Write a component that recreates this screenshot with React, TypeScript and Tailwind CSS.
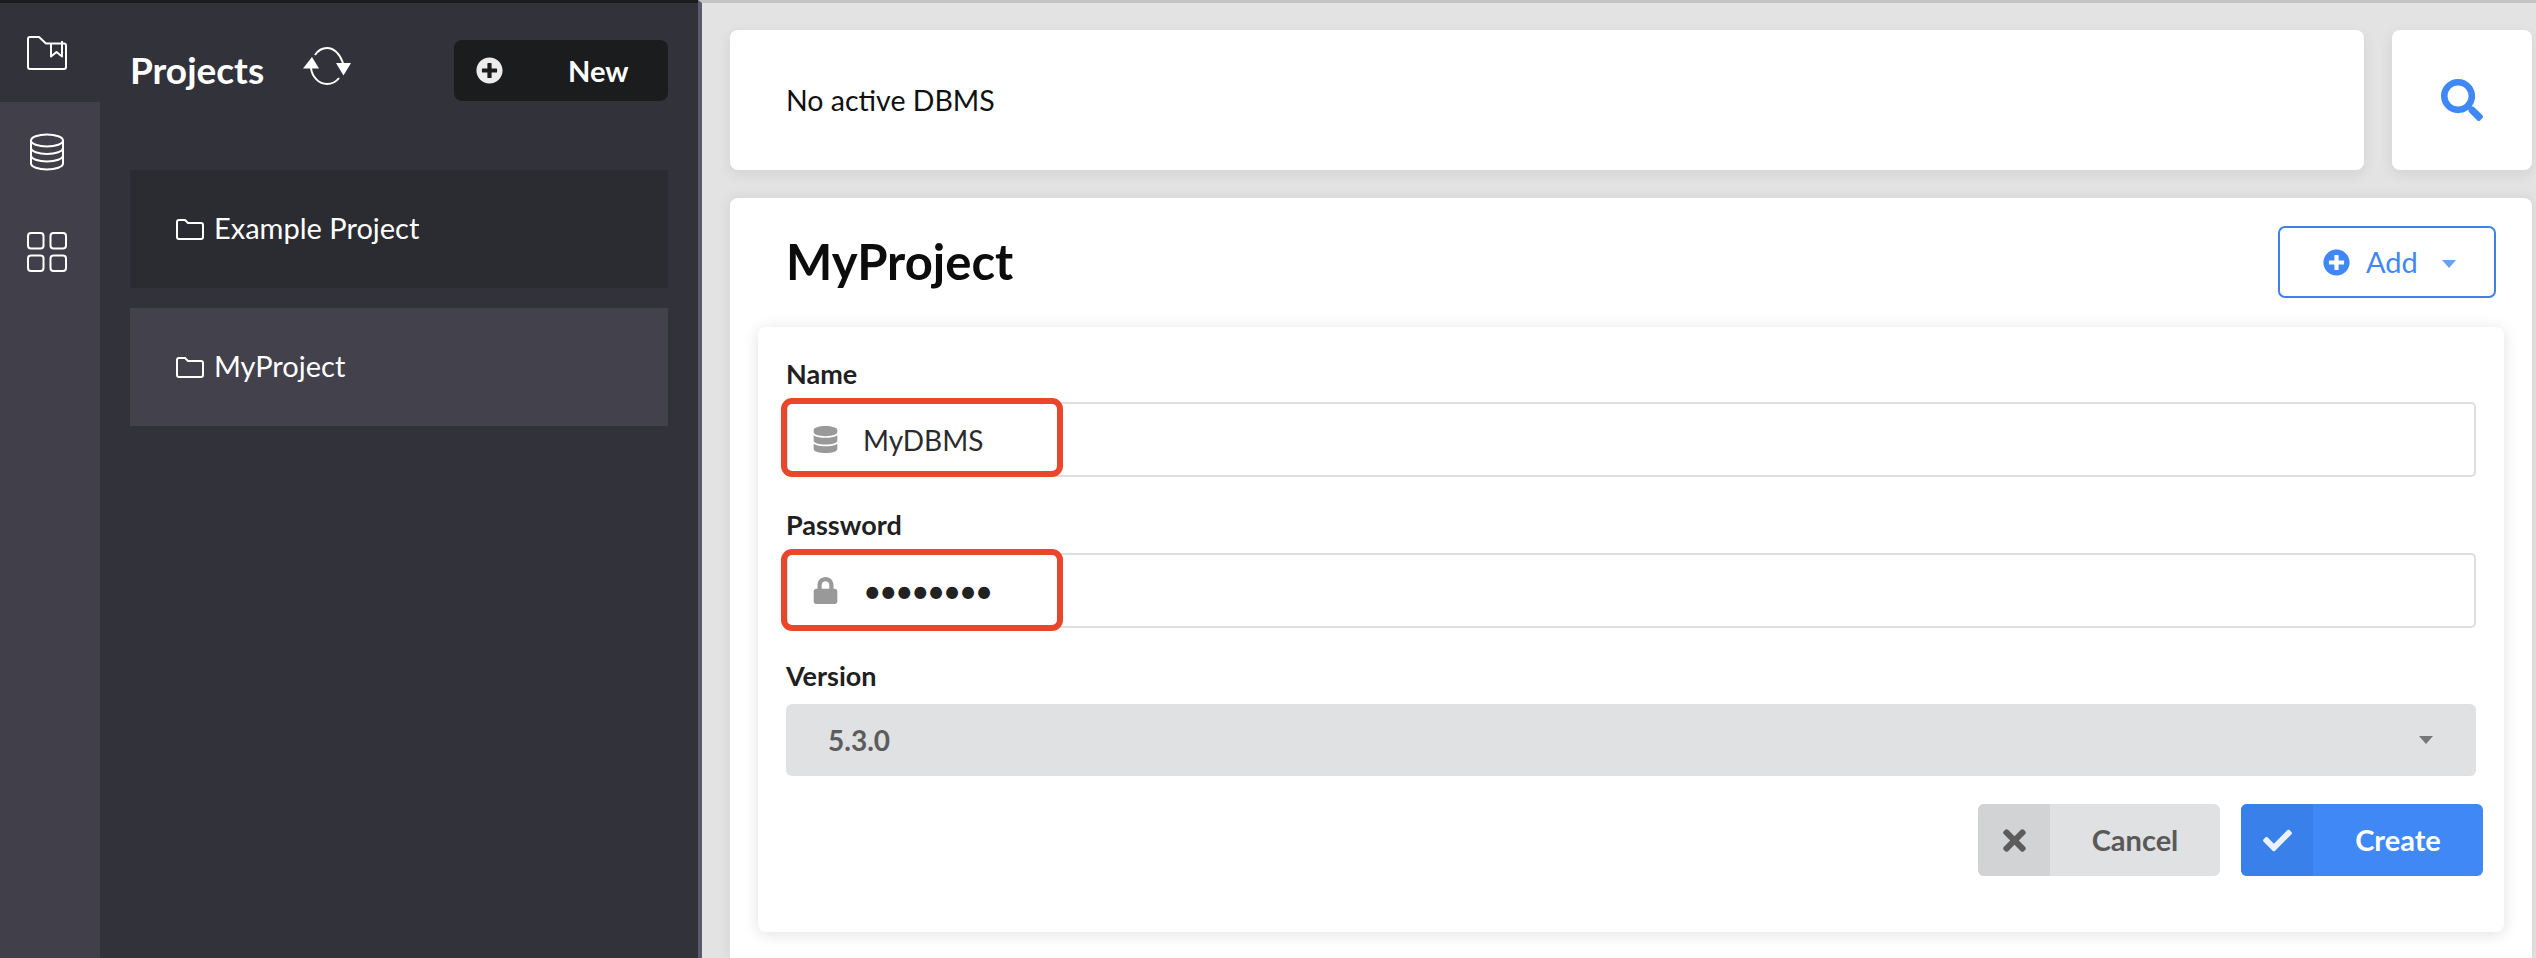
import { FaCheck, FaDatabase, FaLock, FaPlusCircle, FaSearch, FaTimes } from 'react-icons/fa';

const sans = 'font-["Lato","Liberation_Sans",sans-serif]';

function FolderBookmarkIcon() {
  return (
    <svg viewBox="0 0 40 34" className="w-[40px] h-[34px] fill-none stroke-white stroke-2">
      <path d="M1 3a2 2 0 0 1 2-2h9l7 6.500h18a2 2 0 0 1 2 2V31a2 2 0 0 1-2 2H3a2 2 0 0 1-2-2z" strokeLinejoin="round" />
      <path d="M24 7V20.500l5.500-4.500 5.500 4.500V5" strokeLinejoin="round" />
    </svg>
  );
}

function DatabaseIcon() {
  return (
    <svg viewBox="0 0 36 38" className="w-[36px] h-[38px] fill-none stroke-white stroke-2">
      <ellipse cx="18" cy="7.500" rx="16" ry="6" />
      <path d="M2 7.500v23c0 3.300 7.200 6 16 6s16-2.700 16-6v-23" />
      <path d="M2 15c0 3.300 7.200 6 16 6s16-2.700 16-6" />
      <path d="M2 22.500c0 3.300 7.200 6 16 6s16-2.700 16-6" />
    </svg>
  );
}

function GridIcon() {
  return (
    <svg viewBox="0 0 40 40" className="w-[40px] h-[40px] fill-none stroke-white stroke-2">
      <rect x="1" y="1" width="15.500" height="15.500" rx="3" />
      <rect x="23.500" y="1" width="15.500" height="15.500" rx="3" />
      <rect x="1" y="23.500" width="15.500" height="15.500" rx="3" />
      <rect x="23.500" y="23.500" width="15.500" height="15.500" rx="3" />
    </svg>
  );
}

function ReloadIcon() {
  return (
    <svg viewBox="0 0 48 38" className="w-[48px] h-[38px] -mt-[10px]">
      <path d="M12 8C15 3.500 19 1 24 1c7 0 13 6 16 15" className="fill-none stroke-white stroke-2" />
      <path d="M8 21c1 9 8 16 16 16 5 0 9-2 12-6" className="fill-none stroke-white stroke-2" />
      <path d="M33 16h15l-7.500 12.500z" className="fill-white" />
      <path d="M0 21.500h16L9 10z" className="fill-white" />
    </svg>
  );
}

function FolderIcon() {
  return (
    <svg viewBox="0 0 28 21" className="w-[28px] h-[21px] fill-none stroke-white stroke-2">
      <path d="M1 3a2 2 0 0 1 2-2h6l3 3h13a2 2 0 0 1 2 2v12a2 2 0 0 1-2 2H3a2 2 0 0 1-2-2z" strokeLinejoin="round" />
    </svg>
  );
}

function Caret({ className }: { className: string }) {
  return <span className={`block w-0 h-0 border-x-[7px] border-x-transparent border-t-[8px] ${className}`} />;
}

function ProjectRow({ name, active }: { name: string; active?: boolean }) {
  return (
    <div className={`h-[118px] flex items-center pl-[46px] gap-[10px] ${active ? 'bg-[#42414c]' : 'bg-[#2b2c31]'}`}>
      <FolderIcon />
      <span className="text-[29px] text-white -mt-[2px]">{name}</span>
    </div>
  );
}

function Field({ label, icon, calloutHeight, children }: { label: string; icon: React.ReactNode; calloutHeight: string; children: React.ReactNode }) {
  return (
    <div className="flex flex-col">
      <label className="h-[48px] flex items-center text-[27px] leading-none font-bold text-[#1f2022] mb-[5px]">{label}</label>
      <div className="relative h-[75px] border-2 border-[#dedede] rounded-[5px] flex items-center pl-[25px] bg-white">
        <span className="w-[25px] flex justify-center text-[#999999] text-[27px]">{icon}</span>
        <span className="ml-[25px] text-[28px] text-[#2a2b2d]">{children}</span>
        {/* Red callout drawn over the screenshot */}
        <div className={`absolute left-[-7px] top-[-6px] w-[282px] border-[6px] border-[#e8472b] rounded-[11px] ${calloutHeight}`} />
      </div>
    </div>
  );
}

function IconButton({ label, icon, variant }: { label: string; icon: React.ReactNode; variant: 'gray' | 'blue' }) {
  const blue = variant === 'blue';
  return (
    <button className={`w-[242px] h-[72px] rounded-[6px] overflow-hidden flex items-center text-[29px] font-bold ${blue ? 'bg-[#3f88f6] text-white' : 'bg-[#e0e1e2] text-[#595959]'}`}>
      <span className={`w-[72px] h-full flex items-center justify-center ${blue ? 'bg-[#3a80ea] text-[#eaf2fe] text-[29px]' : 'bg-[#d2d3d4] text-[#5c5c5c] text-[33px]'}`}>
        {icon}
      </span>
      <span className="flex-1 text-center">{label}</span>
    </button>
  );
}

export default function App() {
  return (
    <div className={`h-[958px] w-[2536px] flex overflow-hidden ${sans}`}>
      {/* Icon rail */}
      <div className="w-[100px] shrink-0 bg-[#41404a] border-t-[3px] border-[#1c1c1f] flex flex-col">
        <div className="h-[99px] bg-[#32333a] flex items-center justify-center pr-[6px]">
          <FolderBookmarkIcon />
        </div>
        <div className="h-[100px] flex items-center justify-center pr-[6px]">
          <DatabaseIcon />
        </div>
        <div className="h-[100px] flex items-center justify-center pr-[6px]">
          <GridIcon />
        </div>
      </div>

      {/* Projects panel */}
      <div className="w-[598px] shrink-0 bg-[#32333a] border-t-[3px] border-[#1c1c1f] pl-[30px] pr-[30px] pt-[37px]">
        <div className="h-[61px] flex items-center">
          <h1 className="text-[37px] font-bold text-white w-[173px] -mt-[2px]">Projects</h1>
          <ReloadIcon />
          <button className="ml-auto w-[214px] h-full bg-[#1b1c1e] rounded-[8px] flex items-center pl-[22px] text-white">
            <FaPlusCircle className="text-[27px] text-[#ececec]" />
            <span className="ml-[65px] text-[29px] font-bold">New</span>
          </button>
        </div>
        <div className="mt-[69px] flex flex-col gap-[20px]">
          <ProjectRow name="Example Project" />
          <ProjectRow name="MyProject" active />
        </div>
      </div>

      {/* Main area */}
      <div className="flex-1 min-w-0 bg-[#e3e3e3] border-l-[4px] border-[#5a5c6e] pl-[28px] pr-[4px] pt-[27px] border-t-[3px] border-t-[#c4c4c6] flex flex-col gap-[28px]">
        <div className="flex gap-[28px] h-[140px] shrink-0">
          <div className="flex-1 bg-white rounded-[8px] shadow-[0_4px_14px_rgba(0,0,0,0.08)] flex items-center pl-[56px] text-[28.500px] text-[#111111]">
            No active DBMS
          </div>
          <div className="w-[140px] bg-white rounded-[8px] shadow-[0_4px_14px_rgba(0,0,0,0.08)] flex items-center justify-center">
            <FaSearch className="text-[42px] text-[#3f88f6]" />
          </div>
        </div>

        <div className="flex-1 bg-white rounded-t-[8px] shadow-[0_0_14px_rgba(0,0,0,0.08)] pt-[28px] px-[28px]">
          <div className="flex items-center justify-between h-[72px] pr-[8px]">
            <h2 className="pl-[28px] text-[49px] font-bold text-[#0c0c0c]">MyProject</h2>
            <button className="w-[218px] h-full border-2 border-[#3f82e6] rounded-[7px] flex items-center pl-[43px] text-[#3f88f6]">
              <FaPlusCircle className="text-[27px]" />
              <span className="ml-[16px] text-[29px]">Add</span>
              <Caret className="ml-[24px] mt-[3px] border-t-[#6ba2f2]" />
            </button>
          </div>

          <div className="mt-[29px] h-[605px] rounded-[8px] bg-white shadow-[0_2px_16px_rgba(0,0,0,0.12)] pl-[28px] pr-[28px] pt-[22px]">
            <div className="flex flex-col gap-[23px]">
              <Field label="Name" icon={<FaDatabase />} calloutHeight="h-[79px]">MyDBMS</Field>
              <Field label="Password" icon={<FaLock />} calloutHeight="h-[82px]">
                <span className="text-[32px] tracking-[-2.600px] text-[#222222]">••••••••</span>
              </Field>
            </div>
            <div className="mt-[23px] flex flex-col">
              <label className="h-[48px] flex items-center text-[27px] leading-none font-bold text-[#1f2022] mb-[5px]">Version</label>
              <div className="h-[72px] bg-[#e0e1e2] rounded-[6px] flex items-center justify-between pl-[42px] pr-[43px]">
                <span className="text-[28px] font-bold text-[#5c5c5c]">5.3.0</span>
                <Caret className="border-t-[#777777]" />
              </div>
            </div>
            <div className="mt-[28px] flex justify-end gap-[21px] mr-[-7px]">
              <IconButton label="Cancel" icon={<FaTimes />} variant="gray" />
              <IconButton label="Create" icon={<FaCheck />} variant="blue" />
            </div>
          </div>
        </div>
      </div>
    </div>
  );
}
